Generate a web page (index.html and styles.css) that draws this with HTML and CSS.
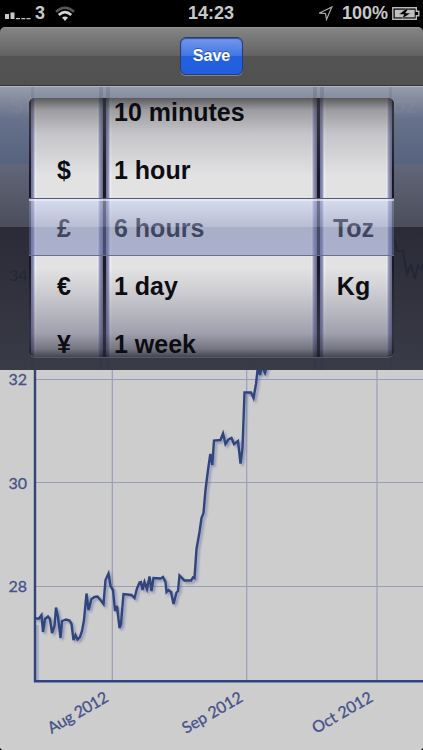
FILE: index.html
```
<!DOCTYPE html>
<html lang="en">
<head>
  <meta charset="UTF-8" />
  <title>Price chart</title>
  <link rel="stylesheet" href="styles.css">
</head>
<body>
  <div class="status-bar">
    <div class="carrier">
      <svg width="27" height="10" viewBox="0 0 27 10" fill="#c8c8c8">
        <path d="M0 4h4v5H0zM5.500 2.500h4V9h-4zM11 8h4v1.300h-4zM16.300 8h4v1.300h-4zM21.500 8h4v1.300h-4z"/>
      </svg>
      <span class="network">3</span>
      <svg class="wifi" width="20" height="16" viewBox="0 0 20 16" fill="none" stroke-width="2.500">
        <path d="M1 5.700Q10-2.300 19 5.700" stroke="#555"/>
        <path d="M3.800 9Q10 3.200 16.200 9" stroke="#d4d4d4"/>
        <path d="M7 11.500Q10 9.500 13 11.500L10 15z" fill="#d4d4d4"/>
      </svg>
    </div>
    <div class="time">14:23</div>
    <div class="battery">
      <svg width="15" height="15" viewBox="0 0 15 15" fill="none" stroke="#aaa" stroke-width="1.200">
        <path d="M13.800 1L8.500 13.500L7.500 7.500L1.200 7.200z"/>
      </svg>
      <span class="percent">100%</span>
      <svg width="28" height="13" viewBox="0 0 28 13">
        <path d="M.8.800h23.500v3.500h2.500v4.500h-2.500v3.500H.8z" fill="none" stroke="#bbb" stroke-width="1.400"/>
        <path d="M2.700 2.700h20v7.700h-20z" fill="#c0c0c0"/>
        <path d="M14.500 1.500L7 7.300l5 .2L10 11.800l8.500-5.500-5-.4 3-4.400z" fill="#000" stroke="#aaa" stroke-width=".5"/>
      </svg>
    </div>
  </div>

  <div class="toolbar">
    <button class="save">Save</button>
  </div>

  <div class="picker">
    <svg class="ghost" width="423" height="284" viewBox="0 86 423 284">
      <text x="10" y="113">$7</text>
      <text x="391" y="113">oz</text>
      <text class="tick" x="9" y="281">34</text>
      <path d="M394 238l3 13h6l4 23 4-9 4 14 3-14 3 4 2-5"/>
    </svg>
    <div class="wheels">
      <div class="wheel currency">
        <div></div>
        <div>$</div>
        <div>£</div>
        <div>€</div>
        <div>¥</div>
      </div>
      <div class="wheel period">
        <div>10 minutes</div>
        <div>1 hour</div>
        <div>6 hours</div>
        <div>1 day</div>
        <div>1 week</div>
      </div>
      <div class="wheel unit">
        <div></div>
        <div></div>
        <div>Toz</div>
        <div>Kg</div>
        <div></div>
      </div>
      <div class="selection"></div>
    </div>
  </div>

  <div class="chart">
    <svg width="423" height="380" viewBox="0 370 423 380">
      <path class="grid" d="M36 379.500H423M36 482.500H423M36 586.500H423M112.300 370V680M246.700 370V680M377 370V680"/>
      <path class="shade" d="M37.500 625V680"/>
      <path class="price" d="M35 618.500L39 618.500L41.500 615L43 632L45 619L48 616.500L50 619L52 633L54.500 626L56 607.500L58 617L60.500 638L62 621L66 619.500L69.500 620.500L71.500 624L73.500 640L75.500 635L77.500 639.500L80 637L82 631L84 620L86.500 593.500L88.500 610L91.500 599L94.500 597L97.500 596.500L100.500 600L103.500 604L105.500 580L108.500 573.500L110.500 586L113 590L115 611L117 606L119.500 628L121 624L123.500 594L131.500 595L134.500 598L137 588.500L139.500 582.500L141 582L142.500 590L144.500 582L147 589L149.500 576.500L151.500 591L153.500 578L160.500 578.500L163 577L165.500 582L166.500 592L168.500 590L171 592L173.500 604L176.500 592.500L178 591L179.500 575.500L184.500 580.500L191 580.500L193 577.500L194.500 578L196.500 549L199.500 532L201.500 518L203.500 513L205.500 490L208 470L210.300 454L212.300 465L214 440.500L220.500 440L223 433.500L225.500 444L228.500 439.500L231.500 438L234 444L238 441L240.500 463.500L242.500 448L244.500 392.500L251 392.500L253.500 398L256 384L258 366L260 375L262 366L265 373L267 366"/>
      <path class="axis" d="M35 370V681.300H423"/>
      <g class="label">
        <text x="8.500" y="385">32</text>
        <text x="8.500" y="488.500">30</text>
        <text x="8.500" y="592">28</text>
        <text transform="translate(109.500 700.500) rotate(-30)" text-anchor="end" textLength="67">Aug 2012</text>
        <text transform="translate(244 700.500) rotate(-30)" text-anchor="end" textLength="67">Sep 2012</text>
        <text transform="translate(374 700.500) rotate(-30)" text-anchor="end" textLength="67">Oct 2012</text>
      </g>
      <path d="M0 748l2 2H0zM423 748l-2 2h2z"/>
    </svg>
  </div>
</body>
</html>
```
FILE: styles.css
```
body {
  margin: 0;
  width: 423px;
  height: 750px;
  overflow: hidden;
  background: #000;
  font-family: "Liberation Sans", Arial, sans-serif;
}

svg {
  display: block;
}

.status-bar {
  display: grid;
  grid-template-columns: 1fr auto 1fr;
  align-items: center;
  height: 27px;
  padding: 0 3px 0 5px;
  color: #c8c8c8;
  font-size: 18px;
  font-weight: bold;
}

.carrier, .battery {
  display: flex;
  align-items: center;
}

.time {
  margin-right: 3px;
}

.network {
  margin: 0 10px 0 3px;
}

.carrier > svg:first-child {
  margin-top: 3px;
}

.battery {
  justify-content: flex-end;
}

.percent {
  margin: 0 4px 0 9px;
}

.toolbar {
  box-sizing: border-box;
  display: flex;
  justify-content: center;
  height: 59px;
  padding-top: 9px;
  border-top: 1px solid #929292;
  border-bottom: 1px solid #343537;
  border-radius: 5px 5px 0 0;
  background: linear-gradient(#858585, #616161 50%, #535353 50%, #515151);
}

.save {
  box-sizing: border-box;
  width: 63px;
  height: 38px;
  padding: 0;
  border: 1px solid #263d77;
  border-radius: 6px;
  background: linear-gradient(#7598ed, #4275e3 50%, #2461df 50%, #225fe0);
  box-shadow: 0 1px 0 #858585, inset 0 1px 1px #344f93;
  color: #fff;
  font: bold 16px "Liberation Sans", Arial, sans-serif;
  text-shadow: 0 -1px 0 rgba(0,0,0,0.35);
}

.picker {
  box-sizing: border-box;
  position: relative;
  height: 284px;
  padding: 11px 29px 13px;
  border-top: 1px solid #b3b5bf;
  background: linear-gradient(#989cac, #858b9d 12px, #67718b 32px, #56637f 77px, #616779 77px, #4b4d5a 140px, #2b2b37 140px, #393b47);
}

/* dividers carry on above and below the wheels */
.picker::before {
  content: "";
  position: absolute;
  inset: 0 31px;
  background: linear-gradient(90deg, rgba(40,40,75,0.1) 3px, transparent 3px 68px, rgba(40,40,75,0.15) 68px 72px, transparent 72px 75px, rgba(40,40,75,0.15) 75px 79px, transparent 79px 282px, rgba(40,40,75,0.15) 282px 286px, transparent 286px 289px, rgba(40,40,75,0.15) 289px 293px, transparent 293px 358px, rgba(40,40,75,0.1) 358px);
}

.ghost {
  position: absolute;
  left: 0;
  top: -1px;
  fill: rgba(150,155,170,0.15);
  font-size: 24px;
  font-weight: bold;
}

.ghost .tick {
  fill: #242735;
  font: 16px Lato, sans-serif;
}

.ghost path {
  fill: none;
  stroke: #242638;
  stroke-width: 2;
}

.wheels {
  position: relative;
  display: grid;
  grid-template-columns: 72px 211px 72px;
  gap: 3px;
  height: 259px;
  padding: 0 2px;
  box-sizing: border-box;
  overflow: hidden;
  border-radius: 6px;
  background: #191a25;
  box-shadow: 0 1px 0 rgba(120,122,135,0.5);
}

/* cylinder shading over the three wheels */
.wheels::after {
  content: "";
  position: absolute;
  inset: 0;
  background: linear-gradient(rgba(45,45,48,0.75), rgba(80,80,88,0.48) 12px, rgba(110,110,125,0.25) 36px, rgba(255,255,255,0) 78px, rgba(255,255,255,0) 170px, rgba(100,100,120,0.12) 188px, rgba(80,80,110,0.45) 235px, rgba(50,50,70,0.62) 251px, rgba(30,30,45,0.8));
}

.wheel {
  box-sizing: border-box;
  padding: 0 6px;
  height: 259px;
  overflow: hidden;
  background: linear-gradient(90deg, #71729a, #8586aa 2px, #a6a7c2 3px, #efeff6 4px, #e2e2e3 6px, #e2e2e3 calc(100% - 6px), #efeff6 calc(100% - 5px), #a6a7c2 calc(100% - 4px), #8081a4 calc(100% - 2px), #66678c);
  color: #0c0d12;
  font-size: 25px;
  font-weight: bold;
  text-align: center;
}

.wheel div {
  position: relative;
  z-index: 1;
  height: 58px;
  line-height: 58px;
  white-space: nowrap;
}

.wheel div:first-child {
  margin-top: -15px;
}

.period {
  padding-left: 8px;
  text-align: left;
}

.currency {
  padding-right: 12px;
}

.unit {
  padding-right: 11px;
}

.selection {
  position: absolute;
  z-index: 2;
  left: 0;
  right: 0;
  top: 100px;
  height: 58px;
  box-sizing: border-box;
  border-top: 1px solid #555b6b;
  border-bottom: 1px solid #6b7084;
  box-shadow: inset 0 2px 0 rgba(235,240,255,0.65);
  background: linear-gradient(rgba(205,213,248,0.5), rgba(150,159,200,0.55) 50%, rgba(112,124,170,0.5) 50%, rgba(115,127,185,0.5));
}

.chart {
  height: 380px;
  background: #cdcdcd;
}

.grid {
  fill: none;
  stroke: #999eb7;
  stroke-width: 1.2;
}

.axis {
  fill: none;
  stroke: #30447a;
  stroke-width: 2.4;
}

.shade {
  fill: none;
  stroke: #a9aec8;
  stroke-width: 3;
}

.price {
  fill: none;
  stroke: #30457c;
  stroke-width: 2.4;
  filter: drop-shadow(2px 2px 1px rgba(85,95,165,0.5));
}

.label {
  fill: #47528a;
  stroke: #47528a;
  stroke-width: 0.3;
  font: 16px Lato, sans-serif;
}
```
